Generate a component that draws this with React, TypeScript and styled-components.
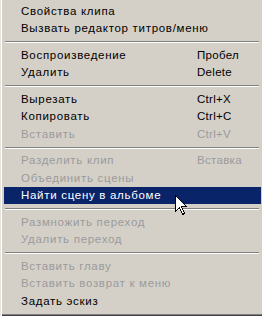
import React from 'react';
import styled, { createGlobalStyle } from 'styled-components';

const GlobalStyle = createGlobalStyle`
    html, body {
        margin: 0;
        padding: 0;
        background: #d4d0c8;
    }
`;

const SMenu = styled.div`
    position: relative;
    width: 262px;
    height: 316px;
    box-sizing: border-box;
    padding: 2px 1px 0 3px;
    display: flex;
    flex-direction: column;
    background: #d4d0c8;
    border-left: 1px solid #e6e4df;
    box-shadow: inset 1px 0 0 #ffffff, inset 0 -1px 0 #404040, inset 0 -2px 0 #808080;
    font-family: 'Liberation Sans', Arial, sans-serif;
    font-size: 11.5px;
    letter-spacing: 0.7px;
    overflow: hidden;
`;

const SItem = styled.div<{ $disabled?: boolean; $active?: boolean }>`
    height: 17.5px;
    display: grid;
    grid-template-columns: 176px 1fr;
    align-items: center;
    padding-left: 17px;
    white-space: nowrap;
    background: ${({ $active }) => ($active ? '#0a246a' : 'transparent')};
    color: ${({ $active, $disabled }) =>
        $active ? '#ffffff' : $disabled ? '#9b9b9b' : '#000000'};
`;

const SShortcut = styled.span`
    letter-spacing: 0.3px;
`;

const SSeparator = styled.div`
    height: 9px;
    box-sizing: border-box;
    padding-top: 4px;
    margin-right: 2px;

    &::before {
        content: '';
        display: block;
        height: 1px;
        margin-left: 1px;
        background: #808080;
        border-bottom: 1px solid #ffffff;
    }
`;

const SCursor = styled.svg`
    position: absolute;
    left: 174px;
    top: 195px;
    width: 13px;
    height: 21px;
`;

type Entry =
    | { label: string; shortcut?: string; disabled?: boolean; active?: boolean }
    | 'sep';

const entries: Entry[] = [
    { label: 'Свойства клипа' },
    { label: 'Вызвать редактор титров/меню' },
    'sep',
    { label: 'Воспроизведение', shortcut: 'Пробел' },
    { label: 'Удалить', shortcut: 'Delete' },
    'sep',
    { label: 'Вырезать', shortcut: 'Ctrl+X' },
    { label: 'Копировать', shortcut: 'Ctrl+C' },
    { label: 'Вставить', shortcut: 'Ctrl+V', disabled: true },
    'sep',
    { label: 'Разделить клип', shortcut: 'Вставка', disabled: true },
    { label: 'Объединить сцены', disabled: true },
    { label: 'Найти сцену в альбоме', active: true },
    'sep',
    { label: 'Размножить переход', disabled: true },
    { label: 'Удалить переход', disabled: true },
    'sep',
    { label: 'Вставить главу', disabled: true },
    { label: 'Вставить возврат к меню', disabled: true },
    { label: 'Задать эскиз' },
];

const App = () => {
    return (
        <>
            <GlobalStyle />
            <SMenu>
                {entries.map((e, i) =>
                    e === 'sep' ? (
                        <SSeparator key={i} />
                    ) : (
                        <SItem key={i} $disabled={e.disabled} $active={e.active}>
                            <span>{e.label}</span>
                            <SShortcut>{e.shortcut}</SShortcut>
                        </SItem>
                    )
                )}
                <SCursor viewBox="0 0 13 21">
                    <path
                        d="M0.5 0.5 L0.5 16.5 L4.5 12.5 L7.5 19.5 L9.5 18.5 L6.5 11.5 L11.5 11.5 Z"
                        fill="#ffffff"
                        stroke="#000000"
                        strokeWidth="1"
                        shapeRendering="crispEdges"
                    />
                </SCursor>
            </SMenu>
        </>
    );
};

export default App;
